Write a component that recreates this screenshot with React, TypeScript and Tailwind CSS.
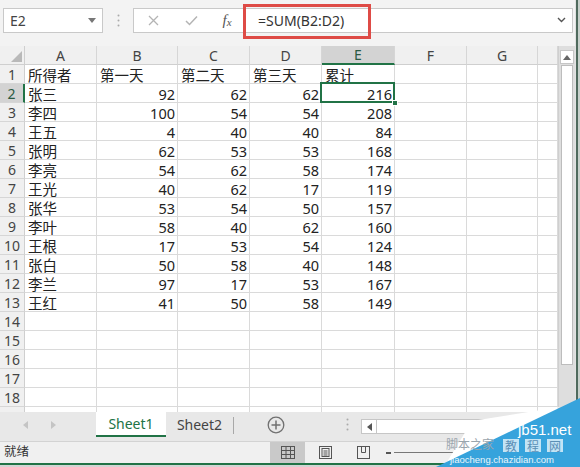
import React from "react";

const rows: (string | number)[][] = [
  ["所得者", "第一天", "第二天", "第三天", "累计"],
  ["张三", 92, 62, 62, 216],
  ["李四", 100, 54, 54, 208],
  ["王五", 4, 40, 40, 84],
  ["张明", 62, 53, 53, 168],
  ["李亮", 54, 62, 58, 174],
  ["王光", 40, 62, 17, 119],
  ["张华", 53, 54, 50, 157],
  ["李叶", 58, 40, 62, 160],
  ["王根", 17, 53, 54, 124],
  ["张白", 50, 58, 40, 148],
  ["李兰", 97, 17, 53, 167],
  ["王红", 41, 50, 58, 149],
];

const letters = ["A", "B", "C", "D", "E", "F", "G", ""];

function Cell({ v, sel }: { v?: string | number; sel?: boolean }) {
  const isNum = typeof v === "number";
  return (
    <div
      className={
        "relative h-[19px] bg-white border-r border-b border-[#dadada] text-[14.5px] leading-[20px] text-[#222] whitespace-nowrap " +
        (isNum ? "text-right pr-[2px]" : "text-left pl-[3px]")
      }
    >
      {v !== undefined ? String(v) : ""}
      {sel && (
        <>
          <div className="absolute left-[-2px] top-[-2px] right-[-1px] bottom-[-1px] border-2 border-[#217346] z-10" />
          <div className="absolute right-[-4px] bottom-[-4px] w-[6px] h-[6px] bg-[#217346] border border-white z-20" />
        </>
      )}
    </div>
  );
}

export default function App() {
  const gridRows: React.ReactNode[] = [];
  gridRows.push(
    <div key="corner" className="h-[19px] bg-[#f0f0f0] border-r border-b border-[#cfcfcf] relative">
      <svg className="absolute right-[2px] bottom-[2px]" width="11" height="11" viewBox="0 0 11 11">
        <polygon points="11,0 11,11 0,11" fill="#b9b9b9" />
      </svg>
    </div>
  );
  letters.forEach((l, i) => {
    const sel = l === "E";
    gridRows.push(
      <div
        key={"h" + i}
        className={
          "h-[19px] flex items-center justify-center text-[14px] border-r border-[#d6d6d6] " +
          (sel
            ? "bg-[#d3d3d3] border-b-2 border-b-[#217346] text-[#2a5a43]"
            : "bg-[#f0f0f0] border-b border-b-[#cfcfcf] text-[#444]")
        }
      >
        {l}
      </div>
    );
  });
  for (let r = 0; r < 19; r++) {
    const sel = r === 1;
    gridRows.push(
      <div
        key={"r" + r}
        className={
          "h-[19px] flex items-center justify-center text-[14px] border-b border-[#d6d6d6] " +
          (sel
            ? "bg-[#d3d3d3] border-r-2 border-r-[#217346] text-[#2a5a43]"
            : "bg-[#f0f0f0] border-r border-r-[#cfcfcf] text-[#444]")
        }
      >
        {r < 18 ? r + 1 : ""}
      </div>
    );
    const data = rows[r];
    for (let c = 0; c < 8; c++) {
      gridRows.push(<Cell key={r + "-" + c} v={data ? data[c] : undefined} sel={r === 1 && c === 4} />);
    }
  }

  return (
    <div className="w-[580px] h-[467px] overflow-hidden relative flex bg-[#e4e4e4] font-['Noto_Sans','Noto_Sans_CJK_SC',sans-serif]">
      <div className="w-[575px] flex flex-col">
        {/* top formula bar */}
        <div className="h-[40px] bg-[#f3f3f3] flex items-center shrink-0">
          <div className="ml-[3px] w-[100px] h-[25px] bg-white border border-[#c9c9c9] flex items-center justify-between pl-[6px] pr-[6px] text-[14px] text-[#444]">
            <span>E2</span>
            <svg width="8" height="5" viewBox="0 0 8 5">
              <polygon points="0,0 8,0 4,5" fill="#777" />
            </svg>
          </div>
          <div className="w-[30px] flex justify-center">
            <svg width="3" height="13" viewBox="0 0 3 13">
              <circle cx="1.5" cy="1.5" r="1" fill="#aaa" />
              <circle cx="1.5" cy="6.5" r="1" fill="#aaa" />
              <circle cx="1.5" cy="11.5" r="1" fill="#aaa" />
            </svg>
          </div>
          <div className="w-[440px] h-[25px] bg-white border border-[#c9c9c9] flex items-center relative">
            <div className="w-[38px] flex justify-center">
              <svg width="11" height="11" viewBox="0 0 11 11">
                <path d="M1 1 L10 10 M10 1 L1 10" stroke="#b4b4b4" strokeWidth="1.3" />
              </svg>
            </div>
            <div className="w-[38px] flex justify-center">
              <svg width="13" height="11" viewBox="0 0 13 11">
                <path d="M1 6 L4.5 9.5 L12 1.5" stroke="#b4b4b4" strokeWidth="1.5" fill="none" />
              </svg>
            </div>
            <div className="w-[34px] flex justify-center text-[#555] font-['Liberation_Serif',serif] italic text-[15px] leading-none">
              <span>f</span>
              <span className="text-[11px] mt-[4px]">x</span>
            </div>
            <div className="flex-1 pl-[14px] text-[14px] text-[#333]">=SUM(B2:D2)</div>
            <div className="w-[22px] flex justify-center">
              <svg width="9" height="6" viewBox="0 0 9 6">
                <path d="M1 1 L4.5 4.5 L8 1" stroke="#555" strokeWidth="1.4" fill="none" />
              </svg>
            </div>
          </div>
        </div>
        <div className="h-[6px] bg-[#f3f3f3] shrink-0" />
        {/* grid area */}
        <div className="h-[366px] flex shrink-0">
          <div className="w-[558px] h-[366px] overflow-hidden bg-white">
            <div className="grid grid-cols-[25px_72px_81px_72px_72px_73px_72px_71px_20px]">{gridRows}</div>
          </div>
          <div className="w-[17px] h-[366px] bg-[#dedede] border-l border-[#cfcfcf] flex flex-col items-center pt-[4px]">
            <div className="w-[14px] h-[14px] bg-white border border-[#c6c6c6] flex items-center justify-center">
              <svg width="8" height="5" viewBox="0 0 8 5">
                <polygon points="0,5 8,5 4,0" fill="#666" />
              </svg>
            </div>
            <div className="w-[12px] h-[300px] bg-white border border-[#bdbdbd] mt-[1px]" />
          </div>
        </div>
        {/* tab bar */}
        <div className="h-[29px] bg-[#e8e8e8] flex items-start shrink-0">
          <div className="w-[96px] h-[25px] flex items-center">
            <div className="ml-[23px] w-[5px] flex">
              <svg width="5" height="8" viewBox="0 0 5 8">
                <polygon points="5,0 5,8 0,4" fill="#c4c4c4" />
              </svg>
            </div>
            <div className="ml-[23px] w-[5px] flex">
              <svg width="5" height="8" viewBox="0 0 5 8">
                <polygon points="0,0 0,8 5,4" fill="#c4c4c4" />
              </svg>
            </div>
          </div>
          <div className="w-[70px] h-[25px] bg-white border-b-2 border-[#217346] flex items-center justify-center text-[14px] text-[#217346]">
            Sheet1
          </div>
          <div className="w-[67px] h-[25px] flex items-center justify-center text-[14px] text-[#444]">Sheet2</div>
          <div className="w-px h-[17px] bg-[#a8a8a8] mt-[5px]" />
          <div className="w-[84px] h-[25px] flex items-center justify-center">
            <svg width="18" height="18" viewBox="0 0 18 18">
              <circle cx="9" cy="9" r="7.8" stroke="#707070" strokeWidth="1.3" fill="none" />
              <path d="M9 4.5 V13.5 M4.5 9 H13.5" stroke="#707070" strokeWidth="1.5" />
            </svg>
          </div>
          <div className="w-[43px] h-[25px] flex items-center justify-end pr-[12px]">
            <svg width="3" height="13" viewBox="0 0 3 13">
              <circle cx="1.5" cy="1.5" r="1" fill="#aaa" />
              <circle cx="1.5" cy="6.5" r="1" fill="#aaa" />
              <circle cx="1.5" cy="11.5" r="1" fill="#aaa" />
            </svg>
          </div>
          <div className="flex-1 h-[15px] mt-[7px] bg-white border border-[#c6c6c6] flex">
            <div className="w-[15px] h-full border-r border-[#c6c6c6] flex items-center justify-center">
              <svg width="5" height="8" viewBox="0 0 5 8">
                <polygon points="5,0 5,8 0,4" fill="#555" />
              </svg>
            </div>
          </div>
        </div>
        {/* status bar */}
        <div className="h-[22px] bg-[#f0f0f0] border-t border-[#d3d3d3] flex items-center shrink-0">
          <div className="w-[270px] pl-[4px] text-[12.5px] text-[#333]">就绪</div>
          <div className="w-[35px] h-full bg-[#c9c9c9] flex items-center justify-center">
            <svg width="14" height="13" viewBox="0 0 14 13">
              <rect x="0.5" y="0.5" width="13" height="12" fill="none" stroke="#555" />
              <path d="M5 0.5 V12.5 M9.5 0.5 V12.5 M0.5 4.5 H13.5 M0.5 8.5 H13.5" stroke="#555" />
            </svg>
          </div>
          <div className="w-[40px] flex justify-center">
            <svg width="13" height="13" viewBox="0 0 13 13">
              <rect x="0.5" y="0.5" width="12" height="12" fill="none" stroke="#555" />
              <rect x="3" y="2.5" width="7" height="8" fill="none" stroke="#555" />
              <path d="M4.5 5 H8.5 M4.5 7 H8.5 M4.5 9 H8.5" stroke="#555" />
            </svg>
          </div>
          <div className="w-[36px] flex justify-center">
            <svg width="13" height="13" viewBox="0 0 13 13">
              <rect x="0.5" y="0.5" width="12" height="12" fill="none" stroke="#555" />
              <path d="M4.5 0.5 V6.5 H8.5 V0.5" stroke="#555" fill="none" />
            </svg>
          </div>
          <div className="ml-[5px] flex items-center">
            <div className="w-[5px] h-[2px] bg-[#555]" />
            <div className="ml-[3px] w-[60px] h-px bg-[#777]" />
          </div>
        </div>
        <div className="h-[2px] bg-[#217346] shrink-0" />
        <div className="h-[2px] bg-[#d4d4d4] shrink-0" />
      </div>
      {/* window edge */}
      <div className="w-[5px] flex">
        <div className="w-px bg-[#e2e2e2]" />
        <div className="w-[2px] bg-[#4f6a5d]" />
        <div className="w-[2px] bg-[#c7d0cb]" />
      </div>

      {/* red annotation box */}
      <div className="absolute left-[243px] top-[4px] w-[128px] h-[35px] border-[3px] border-[#de4b46]" />

      {/* watermark */}
      <svg className="absolute left-0 top-0 pointer-events-none" width="580" height="467" viewBox="0 0 580 467">
        <polygon points="444,467 472,421 560,407 506,440" fill="#ffffff" />
        <polygon points="436,467 580,398 580,467" fill="#36a3dc" />
      </svg>
      <div className="absolute left-[518px] top-[422px] text-[15px] leading-none text-white font-['Liberation_Sans',sans-serif]">
        jb51.net
      </div>
      <div className="absolute left-[446px] top-[438px] text-[12px] leading-none text-[#9aa5ad] font-['Noto_Sans_CJK_SC',sans-serif]">
        脚本之家
      </div>
      <div className="absolute left-[503px] top-[439px] flex gap-[6px]">
        {["教", "程", "网"].map((t) => (
          <span key={t} className="bg-white/70 text-[#5b8fb5] text-[12px] leading-[13px] px-[2px] font-['Noto_Sans_CJK_SC',sans-serif]">
            {t}
          </span>
        ))}
      </div>
      <div className="absolute left-[450px] top-[455px] text-[9.5px] leading-none text-white/90 font-['Liberation_Sans',sans-serif]">
        jiaocheng.chazidian.com
      </div>
    </div>
  );
}
